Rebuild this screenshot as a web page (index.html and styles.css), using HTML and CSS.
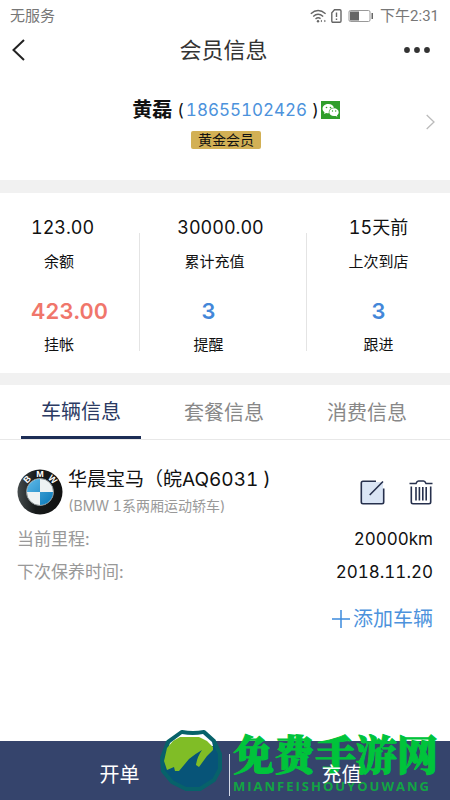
FILE: index.html
```
<!DOCTYPE html>
<html lang="zh-CN">
<head>
  <meta charset="utf-8">
  <title>会员信息</title>
  <meta name="viewport" content="width=device-width">
  <link rel="stylesheet" href="styles.css">
</head>
<body>

<div class="status">
  <span>无服务</span>
  <div class="status-icons">
    <svg width="17" height="14" viewBox="0 0 17 14" fill="none" stroke="#666" stroke-width="1.4">
      <path d="M.8 4.8Q8 -1.6 15.6 4.8M3.2 7.5Q8 3.2 13.2 7.5M5.5 10Q8 7.8 10.6 9.6"/>
      <circle cx="8" cy="12.3" r="1.2" fill="#666" stroke="none"/>
      <path d="M10.5 12l1.5-1.3v2.6zM16 12l-1.7-1.3v2.6z" fill="#666" stroke="none"/>
    </svg>
    <svg width="11" height="14" viewBox="0 0 11 14" fill="none" stroke="#666" stroke-width="1.4">
      <path d="M3.5 .8H8.8Q10 .8 10 2v10q0 1.2-1.2 1.2H2Q.8 13.2 .8 12V3.8z"/>
      <path d="M5.5 3.5v4.5M5.5 9.5v1.5"/>
    </svg>
    <svg class="battery" width="26" height="14" viewBox="0 0 26 14">
      <rect x="1" y="1.5" width="21" height="11" rx="1.5" fill="none" stroke="#999"/>
      <rect x="2" y="2.5" width="9" height="9" fill="#666"/>
      <rect x="23.5" y="4" width="1.5" height="6" fill="#666"/>
    </svg>
    <span class="time">下午2:31</span>
  </div>
</div>

<header class="navbar">
  <button class="back" aria-label="返回">
    <svg width="13" height="22" viewBox="0 0 13 22" fill="none" stroke="#222" stroke-width="2"><path d="M12 1L1.5 11 12 21"/></svg>
  </button>
  <h1>会员信息</h1>
  <button class="more" aria-label="更多">
    <svg width="26" height="6" viewBox="0 0 26 6" fill="#333"><circle cx="3" cy="3" r="2.9"/><circle cx="13" cy="3" r="2.9"/><circle cx="23" cy="3" r="2.9"/></svg>
  </button>
</header>

<section class="member">
  <div class="member-info">
    <div class="member-name">
      <b>黄磊</b><span class="paren">(</span><a href="tel:18655102426">18655102426</a><span class="paren">)</span>
      <svg width="19" height="18" viewBox="0 0 19 18">
        <rect width="19" height="18" fill="#2f9e2b"/>
        <path d="M7.5 3C4.2 3 1.5 5 1.5 7.7c0 1.5.8 2.7 2 3.5L3 13l2.2-1.1c.9.3 1.8.4 2.7.3C7.3 9 9.8 6.8 13 6.8 12.4 4.5 10.2 3 7.5 3z" fill="#fff"/>
        <path d="M13 7.3c-2.7 0-4.7 1.7-4.7 3.9s2 3.9 4.7 3.9c.6 0 1.2-.1 1.7-.2l1.7.9-.4-1.5c1-.8 1.7-1.8 1.7-3.1 0-2.2-2-3.9-4.7-3.9z" fill="#fff"/>
        <g fill="#2f9e2b"><circle cx="5.5" cy="6.5" r=".8"/><circle cx="9.5" cy="6.5" r=".8"/><circle cx="11.5" cy="10" r=".7"/><circle cx="14.7" cy="10" r=".7"/></g>
      </svg>
    </div>
    <span class="level">黄金会员</span>
  </div>
  <svg class="arrow" width="9" height="16" viewBox="0 0 9 16" fill="none" stroke="#bbb" stroke-width="1.3"><path d="M.7 1L8 8 .7 15"/></svg>
</section>

<section class="stats">
  <div class="stats-col first">
    <div class="stat"><span class="value">123.00</span><span class="label">余额</span></div>
    <div class="stat"><span class="value big debt">423.00</span><span class="label">挂帐</span></div>
  </div>
  <div class="stats-col second">
    <div class="stat total"><span class="value">30000.00</span><span class="label">累计充值</span></div>
    <div class="stat"><span class="value big">3</span><span class="label">提醒</span></div>
  </div>
  <div class="stats-col third">
    <div class="stat"><span class="value">15天前</span><span class="label">上次到店</span></div>
    <div class="stat"><span class="value big">3</span><span class="label">跟进</span></div>
  </div>
</section>

<nav class="tabs">
  <button class="active">车辆信息</button>
  <button>套餐信息</button>
  <button>消费信息</button>
</nav>

<main>
  <div class="car">
    <svg class="logo" width="46" height="46" viewBox="0 0 46 46">
      <defs>
        <linearGradient id="ring" x1="0" y1="0" x2="1" y2="0"><stop offset="0" stop-color="#454b4c"/><stop offset=".4" stop-color="#171a1b"/><stop offset="1" stop-color="#111"/></linearGradient>
        <linearGradient id="sky" x1="0" y1="0" x2="1" y2="1"><stop offset="0" stop-color="#5eb9e8"/><stop offset="1" stop-color="#0877b8"/></linearGradient>
      </defs>
      <circle cx="23" cy="23" r="22.5" fill="url(#ring)"/>
      <circle cx="23" cy="23" r="13.5" fill="#eef2f3" stroke="#8b9294"/>
      <path d="M23 23V10A13 13 0 0 0 10 23zM23 23v13a13 13 0 0 0 13-13z" fill="url(#sky)"/>
      <g class="logo-text">
        <text x="23" y="8" transform="rotate(-45 23 23)">B</text>
        <text x="23" y="8">M</text>
        <text x="23" y="8" transform="rotate(45 23 23)">W</text>
      </g>
    </svg>
    <div class="car-name">
      <h2>华晨宝马（皖AQ6031 )</h2>
      <p>(BMW 1系两厢运动轿车)</p>
    </div>
    <button class="edit" aria-label="编辑">
      <svg width="25" height="25" viewBox="0 0 25 25" fill="none" stroke="#26304d" stroke-width="1.6">
        <path d="M2 2h21v21H2z" fill="#dae5f5" stroke="none"/>
        <path d="M16 1.3H3Q1.3 1.3 1.3 3v19q0 1.7 1.7 1.7h19q1.7 0 1.7-1.7V8.5M9.7 15L23 1.5"/>
      </svg>
    </button>
    <button class="delete" aria-label="删除">
      <svg width="24" height="25" viewBox="0 0 24 25" fill="none" stroke="#26304d" stroke-width="1.6">
        <path d="M.5 3.5H7Q8 1 9.5 1h5Q16 1 17 3.5h6.5M2.3 6.5V22q0 1.7 1.7 1.7h16q1.7 0 1.7-1.7V6.5M7 7v13.5M10.4 7v13.5M13.8 7v13.5M17.2 7v13.5"/>
      </svg>
    </button>
  </div>

  <dl>
    <div><dt>当前里程:</dt><dd>20000km</dd></div>
    <div><dt>下次保养时间:</dt><dd>2018.11.20</dd></div>
  </dl>

  <a class="add" href="#">
    <svg width="18" height="18" viewBox="0 0 18 18" stroke="#3d8bdd" stroke-width="1.5"><path d="M9 0v18M0 9h18"/></svg>添加车辆</a>
</main>

<footer>
  <button><span>开单</span></button>
  <button><span>充值</span></button>
  <div class="mark">
    <svg width="64" height="64" viewBox="0 0 64 64">
      <path d="M23 3Q34 5 45 3L55 12 61 25 61 40 55 51 41 60 27 60 13 53 4 42 3 29 9 13z" fill="#075478" stroke="#07626a" stroke-width="4" stroke-linejoin="round"/>
      <path d="M11 14L23 5Q34 7 44 5L53 13 54 17 10 17z" fill="#fff"/>
      <path d="M8 19L14 12 21 8H40L48 12 54 18V21L48 27 40 38 37 36Q38 28 43 21 36 25 30 30L20 42H16L15 38 8 41 5 32z" fill="#80bd26"/>
    </svg>
    <div class="mark-text">
      <strong>免费手游网</strong>
      <small>MIANFEISHOUYOUWANG</small>
    </div>
  </div>
</footer>

</body>
</html>
```
FILE: styles.css
```
* { box-sizing: border-box; }
body { display: flex; flex-direction: column; min-height: 100vh; margin: 0; background: #fff; color: #111; font-family: Inter, "Noto Sans CJK SC", sans-serif; font-variant-numeric: tabular-nums; }
button { padding: 0; border: none; background: none; font: inherit; color: inherit; }
h1, h2, p, dl, dd { margin: 0; font-weight: 400; }
a { color: #4c92dc; text-decoration: none; }
svg { display: block; flex: none; }

.status { display: flex; justify-content: space-between; align-items: center; height: 32px; padding: 0 11px 0 10px; color: #777; font: 15px/20px Roboto, "Noto Sans CJK SC", sans-serif; }
.status-icons { display: flex; align-items: center; gap: 4px; }
.status .battery { margin: 0 2px; }

.navbar { display: grid; grid-template-columns: 1fr auto 1fr; align-items: center; height: 36px; padding: 0 20px 0 17px; }
.navbar .back { justify-self: start; margin-left: -5px; }
.navbar .more { justify-self: end; }
.navbar h1 { color: #333; font-size: 22px; line-height: 32px; }

.member { display: flex; align-items: center; height: 112px; padding: 0 15px 4px 46px; }
.member-info { flex: 1; display: flex; flex-direction: column; align-items: center; gap: 7px; }
.member-name { display: flex; align-items: center; font-size: 17px; line-height: 28px; }
.member-name b { font-size: 20px; }
.member-name .paren { padding: 0 2px 0 5px; }
.level { margin-right: 20px; padding: 0 7px; border-radius: 2px; background: #d2b055; font-size: 14px; line-height: 18px; }

.stats { display: grid; grid-template-columns: 140fr 167fr 143fr; padding: 23px 0 18px; border-top: 13px solid #f1f1f1; border-bottom: 12px solid #f1f1f1; }
.stats-col { display: flex; flex-direction: column; gap: 27px; background: linear-gradient(#e4e4e4, #e4e4e4) right 17px / 1px 118px no-repeat; }
.stats-col.first { padding-left: 31px; }
.stats-col.first .stat { align-items: flex-start; }
.stats-col.first .label { padding-left: 13px; }
.stats-col.second { padding-right: 30px; }
.stats-col.third { background: none; }
.stat { display: flex; flex-direction: column; align-items: center; gap: 12px; }
.stat.total { padding-left: 12px; }
.stat.total .value { padding-left: 12px; }
.value { font-size: 18px; line-height: 24px; }
.big { color: #4387d9; font-size: 22px; font-weight: 600; }
.debt { color: #f0766b; }
.label { font-size: 15px; line-height: 20px; }

.tabs { display: flex; justify-content: space-between; padding: 0 23px 0 21px; border-bottom: 1px solid #e8e8e8; }
.tabs button { width: 120px; height: 54px; padding-top: 2px; color: #888; font-size: 20px; line-height: 28px; }
.tabs .active { margin-bottom: -1px; border-bottom: 3px solid #1c2d55; color: #2b3a63; }

main { flex: 1; padding: 26px 17px 0; }
.car { display: flex; align-items: center; }
.logo-text { fill: #fff; font: bold 9px "Liberation Sans", sans-serif; text-anchor: middle; }
.car-name { flex: 1; padding-left: 5px; }
.car-name h2 { font-size: 19px; line-height: 28px; }
.car-name p { color: #999; font-size: 14px; line-height: 24px; }
.edit { margin-right: 24px; }
dl { padding-top: 5px; }
dl div { display: flex; justify-content: space-between; line-height: 33px; }
dt { color: #999; font-size: 17px; }
dd { font-size: 17px; }
.add { display: flex; justify-content: flex-end; align-items: center; gap: 3px; padding-top: 16px; color: #4c92dc; font-size: 20px; line-height: 28px; }

footer { display: grid; grid-template-columns: 229fr 221fr; position: relative; height: 59px; background: #35446c; color: #fff; }
footer button { padding: 8px 0 0 10px; font-size: 20px; line-height: 28px; }
footer button + button { padding-left: 4px; background: linear-gradient(#d5dae8, #d5dae8) 0 13px / 1px 42px no-repeat; }
footer button span { position: relative; z-index: 2; }
.mark { display: flex; position: absolute; right: 12px; bottom: 7px; align-items: flex-end; gap: 10px; pointer-events: none; }
.mark-text { display: flex; flex-direction: column; gap: 6px; color: #00c43b; }
.mark strong { font-family: "Noto Serif CJK SC", "Noto Sans CJK SC", serif; font-size: 41px; font-weight: 900; line-height: 40px; -webkit-text-stroke: 1px #00c43b; }
.mark small { color: #12a544; font: bold 13px/14px "Open Sans", sans-serif; letter-spacing: 2px; }
```
